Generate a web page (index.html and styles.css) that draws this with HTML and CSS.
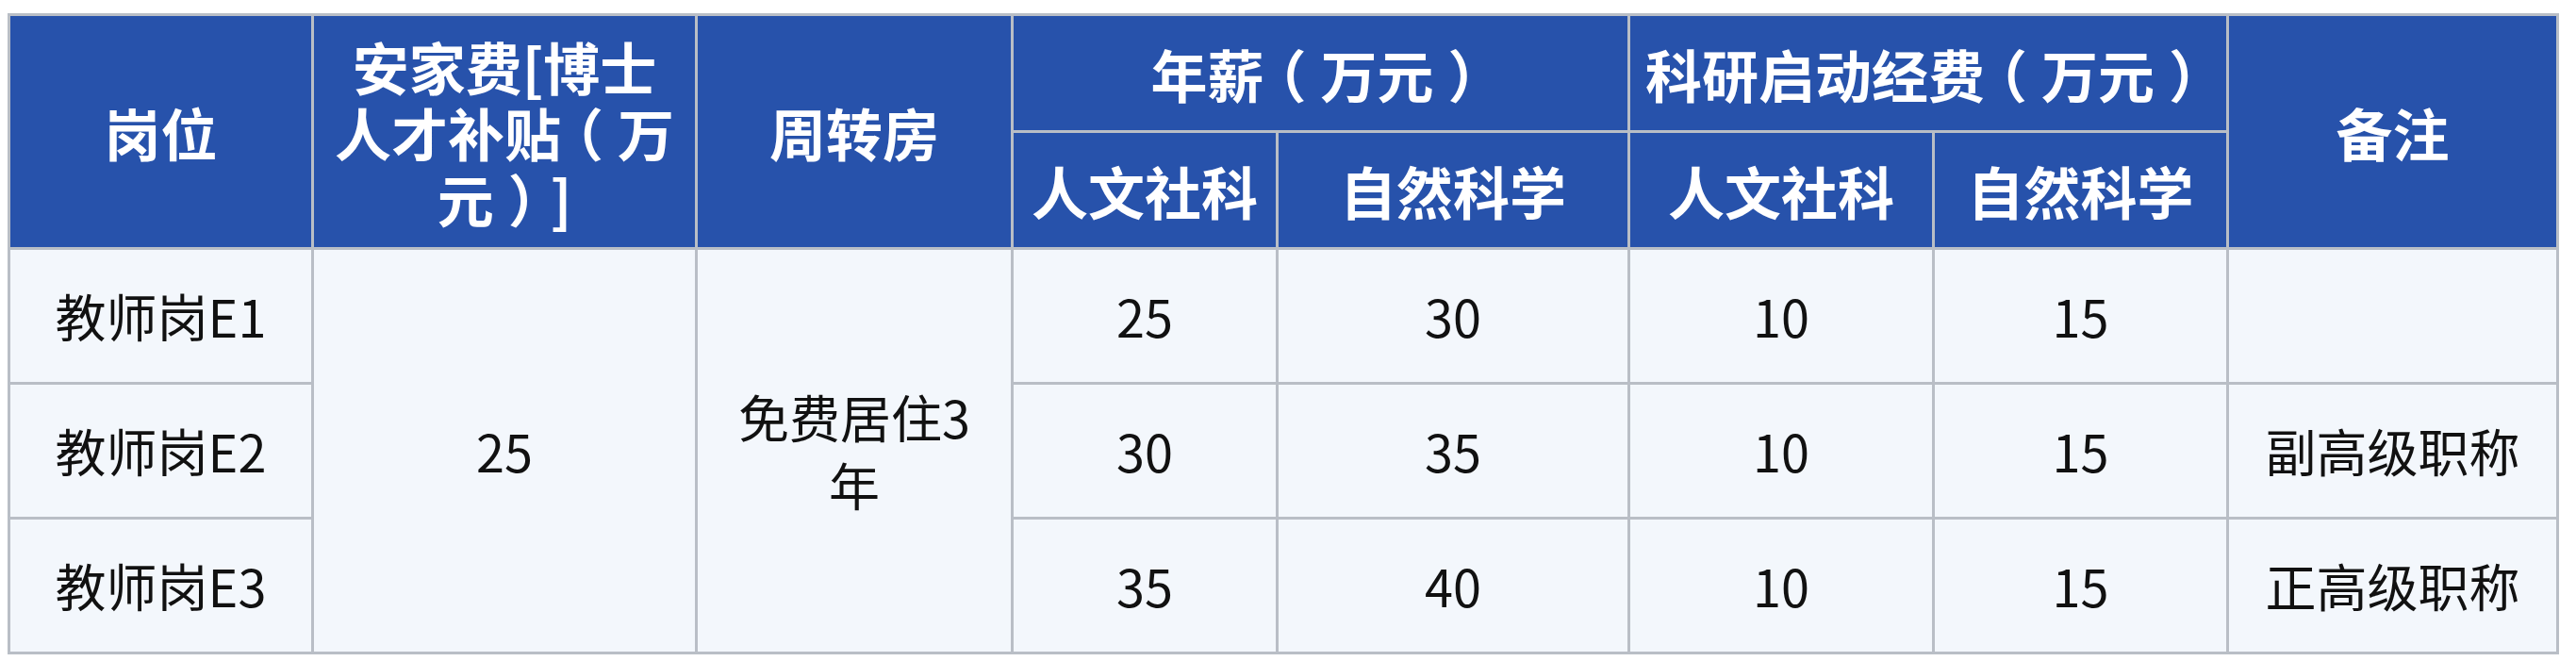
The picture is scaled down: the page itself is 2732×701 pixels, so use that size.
FILE: index.html
```html
<!DOCTYPE html>
<html lang="zh-CN">
<head>
<meta charset="utf-8">
<title>待遇</title>
<link rel="stylesheet" href="styles.css">
</head>
<body>
<table class="pay">
  <colgroup>
    <col class="c1"><col class="c2"><col class="c3"><col class="c4"><col class="c5"><col class="c6"><col class="c7"><col class="c8">
  </colgroup>
  <thead>
    <tr class="h1">
      <th rowspan="2">岗位</th>
      <th rowspan="2" class="wide">安家费[博士人才补贴<span class="p">（</span>万元<span class="p">）</span>]</th>
      <th rowspan="2">周转房</th>
      <th colspan="2">年薪<span class="p">（</span>万元<span class="p">）</span></th>
      <th colspan="2">科研启动经费<span class="p">（</span>万元<span class="p">）</span></th>
      <th rowspan="2">备注</th>
    </tr>
    <tr class="h2">
      <th>人文社科</th>
      <th>自然科学</th>
      <th>人文社科</th>
      <th>自然科学</th>
    </tr>
  </thead>
  <tbody>
    <tr>
      <td>教师岗E1</td>
      <td rowspan="3">25</td>
      <td rowspan="3" class="wrap">免费居住3年</td>
      <td>25</td><td>30</td><td>10</td><td>15</td>
      <td></td>
    </tr>
    <tr>
      <td>教师岗E2</td>
      <td>30</td><td>35</td><td>10</td><td>15</td>
      <td>副高级职称</td>
    </tr>
    <tr>
      <td>教师岗E3</td>
      <td>35</td><td>40</td><td>10</td><td>15</td>
      <td>正高级职称</td>
    </tr>
  </tbody>
</table>
</body>
</html>
```
FILE: styles.css
```css
html, body {
  margin: 0;
  padding: 0;
  background: #ffffff;
}
body {
  padding: 14px 0 0 8px;
  font-family: "Noto Sans CJK SC", "Noto Sans", sans-serif;
}
.pay {
  border-collapse: collapse;
  table-layout: fixed;
  width: 2703px;
  border: 3px solid #b9bec6;
}
.c1 { width: 322px; }
.c2 { width: 407px; }
.c3 { width: 335px; }
.c4 { width: 281px; }
.c5 { width: 373px; }
.c6 { width: 323px; }
.c7 { width: 312px; }
.c8 { width: 350px; }
.pay th, .pay td {
  border: 3px solid #b9bec6;
  text-align: center;
  vertical-align: middle;
  padding: 0 8px;
}
.pay th {
  background: #2752ab;
  color: #ffffff;
  font-weight: 700;
  font-size: 60px;
  line-height: 70px;
}
.pay th.wide { padding: 0 20px; }
.p {
  display: inline-block;
  width: 1em;
  text-align: center;
  font-feature-settings: "halt";
}
.pay td {
  background: #f3f7fc;
  color: #111111;
  font-weight: 400;
  font-size: 54px;
  line-height: 72px;
}
.h1, .h2 { height: 124px; }
.pay tbody tr { height: 143px; }
.pay td.wrap { padding: 0 40px; }
```
